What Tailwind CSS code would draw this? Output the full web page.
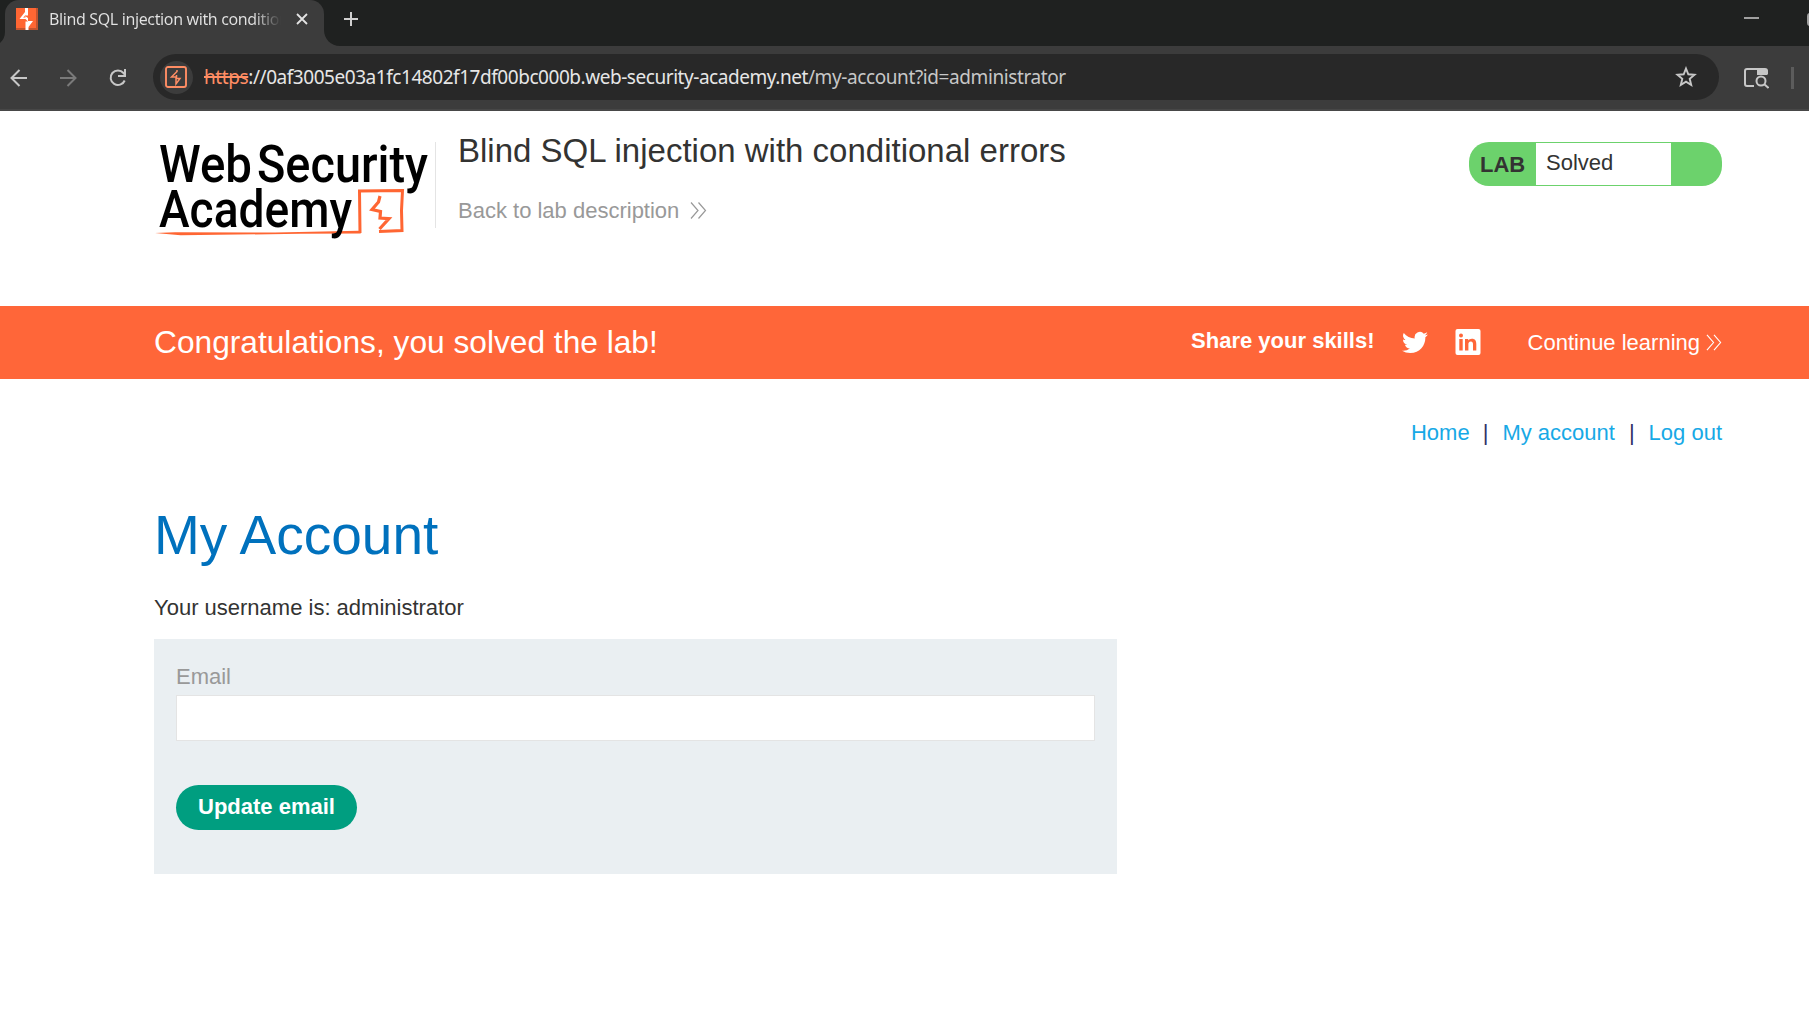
<!DOCTYPE html>
<html lang="en">
<head>
<meta charset="utf-8">
<title>Blind SQL injection with conditional errors</title>
<script src="https://cdn.jsdelivr.net/npm/@tailwindcss/browser@4"></script>
</head>
<body class="h-[1009px] w-[1809px] overflow-hidden bg-white font-['Liberation_Sans',Arial,sans-serif] text-[22px] leading-[30px] text-[#333332]">

<!-- Tab strip -->
<div class="flex h-[46px] bg-[#1f2120]">
  <div class="relative ml-[5px] flex h-[46px] w-[319px] items-center rounded-t-[14px] bg-[#3c3c3c] pb-[8px] pl-[11px]">
    <svg class="absolute bottom-0 -left-[14px] h-[14px] w-[14px]" viewBox="0 0 14 14"><path d="M14 0v14H0C8 14 14 8 14 0z" fill="#3c3c3c"/></svg>
    <svg class="absolute bottom-0 -right-[16px] h-[16px] w-[16px]" viewBox="0 0 16 16"><path d="M0 0v16h16C7 16 0 9 0 0z" fill="#3c3c3c"/></svg>
    <svg class="h-[22px] w-[22px] shrink-0" viewBox="0 0 22 22"><path fill="#ff6633" d="M0 0h22v22H0z"/><path fill="#c4532e" d="M20 0h2v22H0v-2h20z"/><path fill="#fff" d="M9 0h3v7.500h-3.500l3.500 2.500v3h5L12.500 19v3h-3v-8.500h2.500l-2.500-2.500H3.500L9 4z"/><path fill="#ff6633" d="M9.500 7.500 7 9.500h2.500z"/></svg>
    <div class="ml-[11px] w-[232px] overflow-hidden whitespace-nowrap bg-gradient-to-r from-[#e3e3e3] from-88% to-transparent bg-clip-text font-['Noto_Sans',sans-serif] text-[16px] leading-[24px] tracking-[-0.37px] text-transparent">Blind SQL injection with conditional errors</div>
    <svg class="ml-[15px] h-[12px] w-[12px] shrink-0" viewBox="0 0 12 12"><path d="M1 1l10 10M11 1 1 11" stroke="#e3e3e3" stroke-width="1.800" fill="none"/></svg>
  </div>
  <svg class="mt-[12px] ml-[20px] h-[14px] w-[14px]" viewBox="0 0 14 14"><path d="M7 0v14M0 7h14" stroke="#d0d0d0" stroke-width="2"/></svg>
  <div class="flex-1"></div>
  <svg class="mt-[12px] h-[14px] w-[65px]" viewBox="0 0 65 14"><path d="M0 6h15" stroke="#a0a0a0" stroke-width="2"/><rect x="64" y="2" width="12" height="11" rx="2" fill="none" stroke="#a0a0a0" stroke-width="2"/></svg>
</div>

<!-- Toolbar -->
<div class="flex h-[65px] items-center border-b-2 border-[#474747] bg-[#3c3c3c] font-['Noto_Sans',sans-serif]">
  <svg class="ml-[10px] h-[18px] w-[18px]" viewBox="0 0 18 18" fill="none" stroke="#c7c7c7" stroke-width="2"><path d="M17 9H2M9.500 1 1.500 9l8 8"/></svg>
  <svg class="ml-[31px] h-[18px] w-[18px]" viewBox="0 0 18 18" fill="none" stroke="#7a7a7a" stroke-width="2"><path d="M1 9h15M8.500 1l8 8-8 8"/></svg>
  <svg class="ml-[32px] h-[18px] w-[18px]" viewBox="0 0 18 18" fill="none" stroke="#c7c7c7" stroke-width="2"><path d="M15.700 11.500A7.300 7.300 0 1 1 14.500 4l1.800 2"/><path d="M16 0v7H9"/></svg>
  <div class="mb-px ml-[26px] flex h-[46px] w-[1566px] items-center rounded-full bg-[#282828] pr-[22px] pl-[7px]">
    <div class="flex h-[33px] w-[33px] items-center justify-center rounded-full bg-[#3c3c3c]">
      <svg class="mr-px h-[22px] w-[22px]" viewBox="0 0 22 22" fill="none" stroke="#ff8d64" stroke-width="1.900"><rect x="1" y="1" width="20" height="20" rx="2"/><path d="M12 4v1.500L6.500 11H11v7l4-5.500h-3.500V9" stroke-width="1.500"/></svg>
    </div>
    <div class="ml-[11px] text-[19px] leading-[30px] tracking-[-0.4px] whitespace-nowrap text-[#c7c7c7]"><span class="text-[#ff8d64] line-through decoration-2">https</span><span class="tracking-[-0.45px] text-[#e6e6e6]">://0af3005e03a1fc14802f17df00bc000b.web-security-academy.net</span>/my-account?id=administrator</div>
    <div class="flex-1"></div>
    <svg class="h-[22px] w-[22px]" viewBox="0 0 22 22" fill="none" stroke="#c7c7c7" stroke-width="1.900"><path d="M11 2.500l2.300 5.800 6.200.5-4.800 4 1.500 6.200-5.200-3.400L5.800 19l1.500-6.200-4.800-4 6.200-.5z"/></svg>
  </div>
  <svg class="ml-[25px] h-[22px] w-[25px]" viewBox="0 0 25 22" fill="none" stroke="#c7c7c7" stroke-width="2"><path d="M10 19H3a2 2 0 0 1-2-2V4a2 2 0 0 1 2-2h18a2 2 0 0 1 2 2v3"/><path d="M13 2h9l1.500 1.500V8H13z" fill="#c7c7c7" stroke="none"/><circle cx="17" cy="14" r="4.500"/><path d="M20 17l4.500 4"/></svg>
  <div class="ml-[22px] h-[22px] w-[3px] bg-[#5c5c5c]"></div>
</div>

<!-- Lab header -->
<header class="flex h-[195px] pr-[87px] pl-[154px]">
  <svg class="mt-[24px] h-[110px] w-[281px] shrink-0" viewBox="154 135 281 110" font-family="Roboto, sans-serif" font-weight="500" font-size="52" fill="#000">
    <text x="159" y="181.500" textLength="93" lengthAdjust="spacingAndGlyphs">Web</text>
    <text x="257" y="181.500" textLength="171" lengthAdjust="spacingAndGlyphs">Security</text>
    <path d="M155 233l20-.8 100 .3 84-1.700 2 .1-.3 2.600-60 .3-120 1.500z" fill="#ff6633"/>
    <path d="M360 233l-.5-42 43-.5-1 20 .5 20-23 1" fill="none" stroke="#ff6633" stroke-width="3"/>
    <path d="M380 196l-1.500 6-6.500 7.500 8.500 2-.5 6.500 9 .7-9.500 10.300" fill="none" stroke="#ff6633" stroke-width="3.200"/>
    <text x="159" y="226.500" textLength="193" lengthAdjust="spacingAndGlyphs">Academy</text>
  </svg>
  <div class="mt-[31px] h-[86px] w-px shrink-0 bg-[#e4e4e4]"></div>
  <div class="pt-[20px] pl-[22px]">
    <h2 class="text-[33px] leading-[40px] whitespace-nowrap">Blind SQL injection with conditional errors</h2>
    <a class="mt-[25px] flex items-center text-[#999999]">Back to lab description
      <svg class="mb-px ml-[11px] h-[17px] w-[17px]" viewBox="0 0 17 17" fill="none" stroke="#999" stroke-width="1.200"><path d="M1 .5l7 8-7 8M8.500.5l7 8-7 8"/></svg>
    </a>
  </div>
  <div class="flex-1"></div>
  <div class="mt-[31px] flex h-[44px] w-[253px] rounded-[20px] bg-[#6cd26c] py-px">
    <div class="w-[67px] pt-[7px] pl-[11px] font-bold leading-[30px]">LAB</div>
    <div class="w-[135px] bg-white pt-[5px] pl-[10px]">Solved</div>
  </div>
</header>

<!-- Solved banner -->
<section class="flex h-[73px] bg-[#ff6639] pr-[87px] pl-[154px] text-white">
  <p class="pt-[16px] text-[31.700px] leading-[41px]">Congratulations, you solved the lab!</p>
  <div class="flex-1"></div>
  <span class="pt-[20px] font-bold">Share your skills!</span>
  <svg class="mt-[23px] ml-[27px] h-[27px] w-[26px]" viewBox="0 0 24 24" fill="#fff"><path d="M23.950 4.570a10 10 0 0 1-2.820.77 4.960 4.960 0 0 0 2.160-2.720c-.95.560-2 .96-3.130 1.190a4.920 4.920 0 0 0-8.390 4.480C7.690 8.090 4.070 6.130 1.640 3.160a4.930 4.930 0 0 0 1.520 6.570 4.900 4.900 0 0 1-2.230-.61v.06a4.920 4.920 0 0 0 3.950 4.830 5 5 0 0 1-2.210.08 4.940 4.940 0 0 0 4.600 3.420A9.870 9.870 0 0 1 0 19.540a13.990 13.990 0 0 0 7.550 2.210c9.050 0 14-7.500 14-13.980 0-.21 0-.42-.02-.63a9.940 9.940 0 0 0 2.420-2.570z"/></svg>
  <svg class="mt-[23px] ml-[27px] h-[26px] w-[26px]" viewBox="0 0 26 26"><rect x=".5" width="25" height="26" rx="2" fill="#fff"/><g fill="#ff6639"><circle cx="6" cy="6.500" r="2"/><path d="M4.300 10h3.400v11.500H4.300zM10 10h3.200v1.600c.7-1.200 2-1.900 3.600-1.900 3.500 0 4.500 2.200 4.500 5.300v6.500H18v-5.900c0-1.600-.3-3-2.200-3s-2.400 1.400-2.400 3v5.900H10z"/></g></svg>
  <a class="ml-[47px] flex pt-[22px]">Continue learning
    <svg class="mt-[6px] ml-[6px] h-[17px] w-[16px]" viewBox="0 0 17 17" fill="none" stroke="#fff" stroke-width="1.200"><path d="M1 .5l7 8-7 8M8.500.5l7 8-7 8"/></svg>
  </a>
</section>

<!-- Account page -->
<main class="pr-[87px] pl-[154px]">
  <nav class="flex justify-end gap-[14px] pt-[39px] text-[#17a9e6]">
    <a>Home</a><span class="-ml-px text-[#333366]">|</span><a>My account</a><span class="text-[#333366]">|</span><a>Log out</a>
  </nav>
  <h1 class="mt-[57px] text-[55px] leading-[60px] text-[#0071bd]">My Account</h1>
  <p class="mt-[28px]">Your username is: administrator</p>
  <form class="mt-[16px] h-[235px] w-[963px] bg-[#eaeff2] px-[22px] pt-[23px]">
    <label class="block text-[#999999]">Email</label>
    <input class="mt-[3px] block h-[46px] w-full border border-[#e4e4e4] bg-white" type="text">
    <button type="button" class="mt-[44px] block h-[45px] w-[181px] rounded-full bg-[#009e80] pb-[2px] font-bold text-white">Update email</button>
  </form>
</main>
</body>
</html>
